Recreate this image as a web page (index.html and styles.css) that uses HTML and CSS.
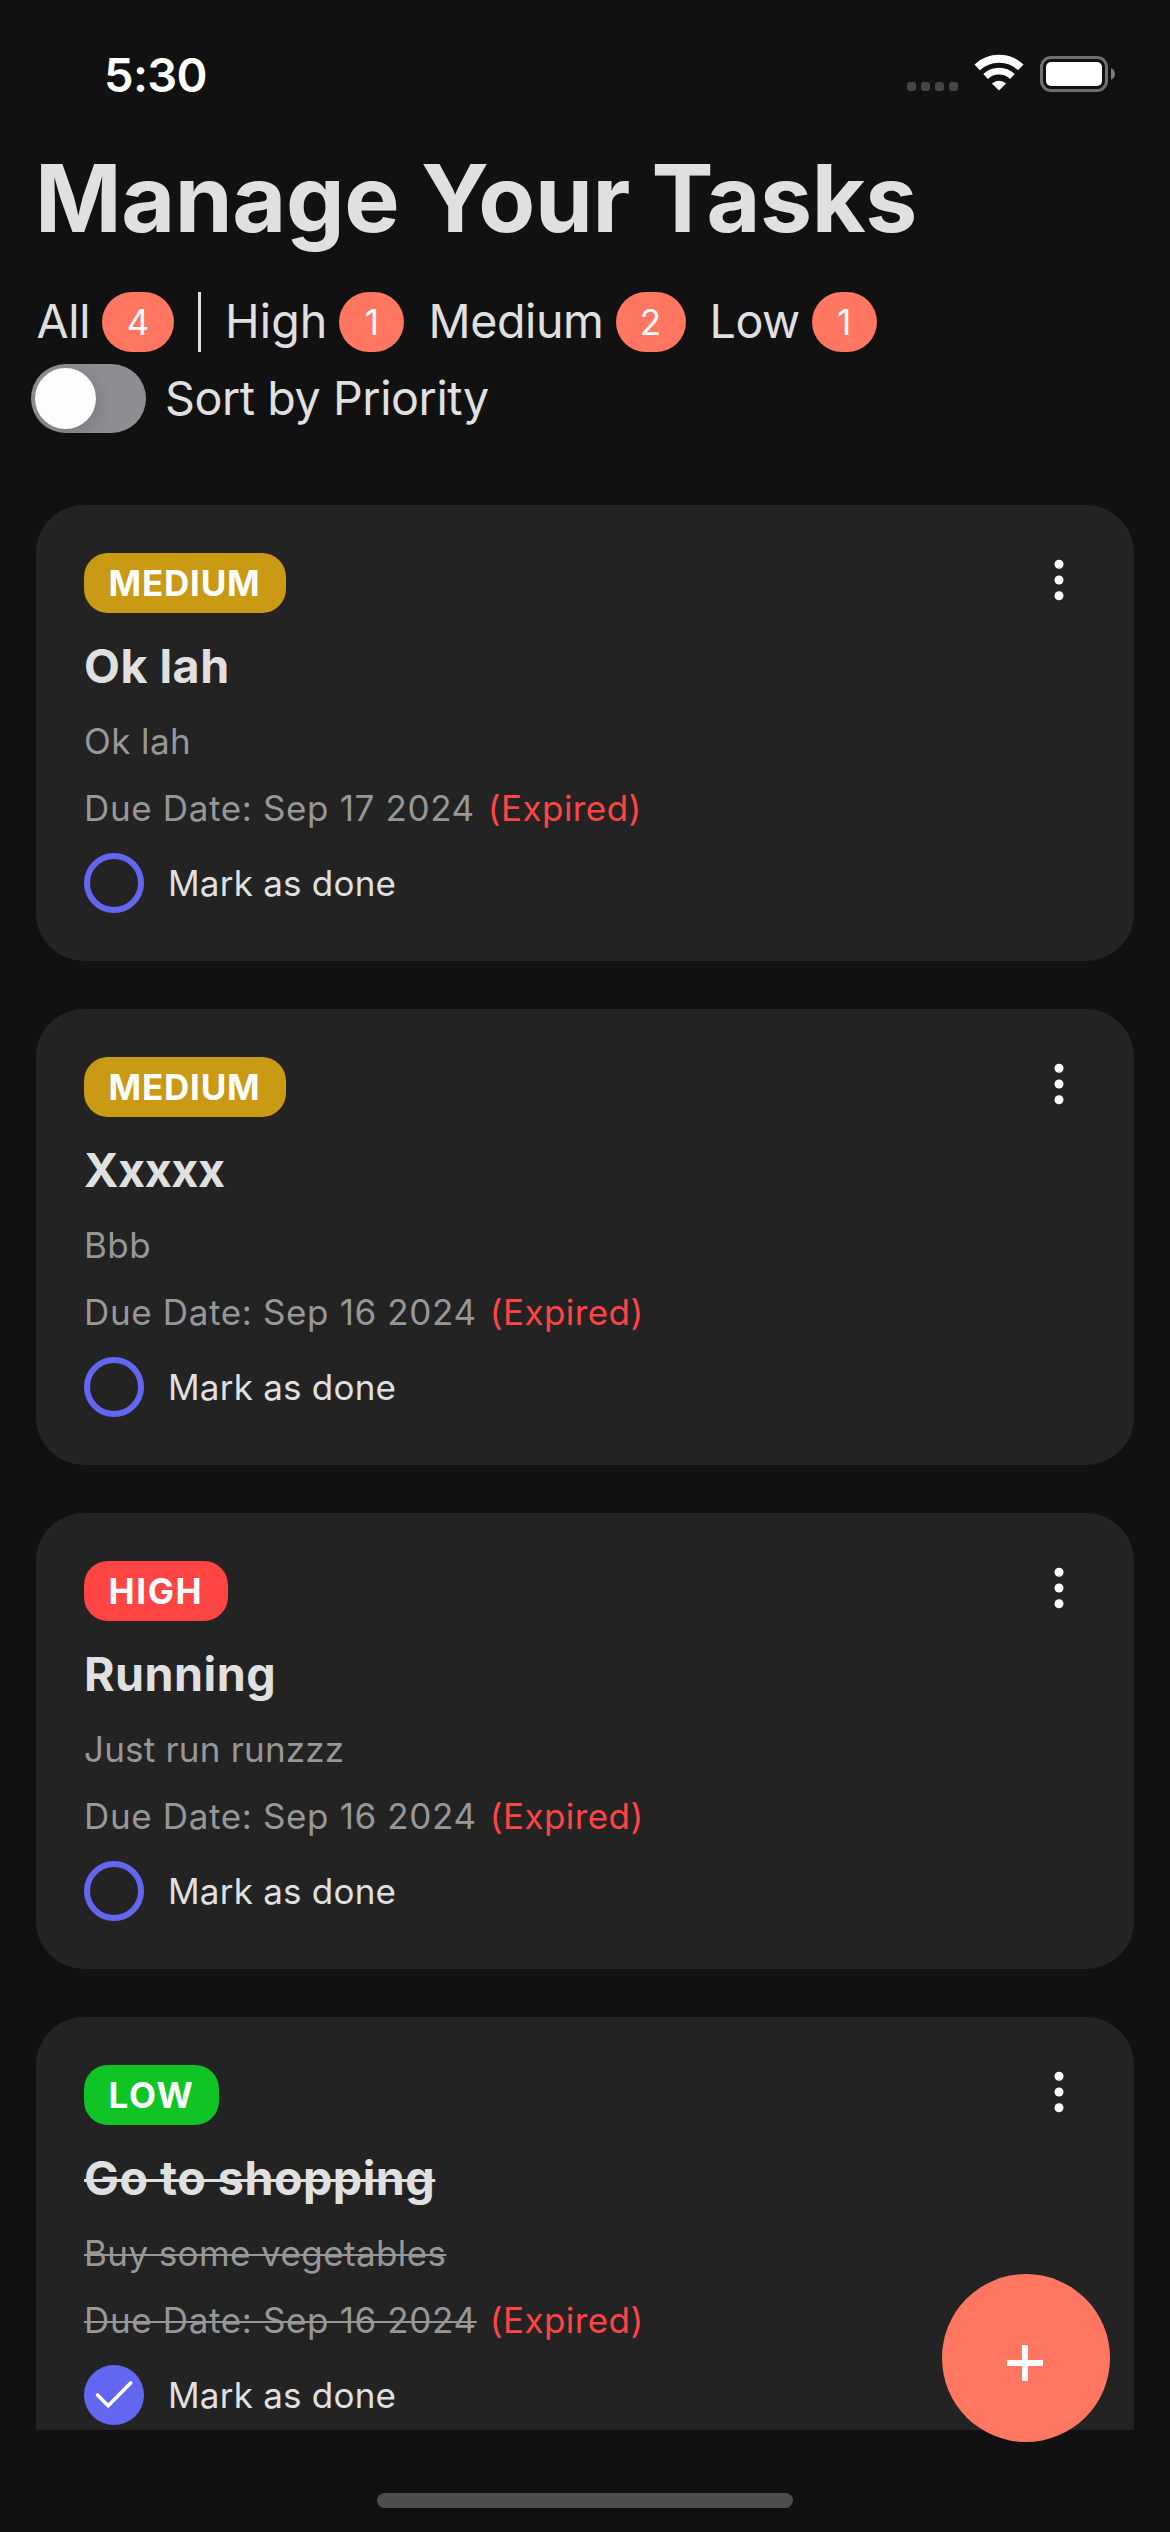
FILE: index.html
```html
<!DOCTYPE html>
<html lang="en">
<head>
<meta charset="utf-8">
<title>Manage Your Tasks</title>
<link rel="stylesheet" href="styles.css">
</head>
<body>
<div class="screen">
  <header class="status-bar">
    <span class="clock">5:30</span>
    <div class="status-icons">
      <div class="signal"><i></i><i></i><i></i><i></i></div>
      <svg class="wifi" width="50" height="38" viewBox="0 0 50 38">
        <path d="M3.2 13.4A32 32 0 0 1 46.8 13.4" fill="none" stroke="#fff" stroke-width="8"/>
        <path d="M11.6 22.4A19.7 19.7 0 0 1 38.4 22.4" fill="none" stroke="#fff" stroke-width="6.8"/>
        <path d="M25 36.6L17.9 29.6A10.4 10.4 0 0 1 32.1 29.6Z" fill="#fff"/>
      </svg>
      <svg class="battery" width="76" height="36" viewBox="0 0 76 36">
        <rect x="1.5" y="1.5" width="65" height="33" rx="9.5" fill="none" stroke="#6f6f6f" stroke-width="3"/>
        <rect x="6" y="6" width="56" height="24" rx="5" fill="#fff"/>
        <path d="M71 12.2C73.6 13.2 75 15.4 75 18S73.6 22.8 71 23.8Z" fill="#7c7c7c"/>
      </svg>
    </div>
  </header>

  <h1 class="page-title">Manage Your Tasks</h1>

  <nav class="filters">
    <div class="filter"><span class="filter-name">All</span><span class="count count-all">4</span></div>
    <div class="divider"></div>
    <div class="filter"><span class="filter-name high">High</span><span class="count count-narrow">1</span></div>
    <div class="filter"><span class="filter-name">Medium</span><span class="count">2</span></div>
    <div class="filter"><span class="filter-name low">Low</span><span class="count count-narrow">1</span></div>
  </nav>

  <div class="sort">
    <div class="toggle"><div class="knob"></div></div>
    <span class="sort-label">Sort by Priority</span>
  </div>

  <main class="tasks">
    <article class="card">
      <div class="card-head">
        <span class="badge medium">MEDIUM</span>
        <svg class="more" width="12" height="44" viewBox="0 0 12 44"><g fill="#fff"><circle cx="6" cy="6.3" r="4.5"/><circle cx="6" cy="22" r="4.5"/><circle cx="6" cy="37.7" r="4.5"/></g></svg>
      </div>
      <h2 class="task-title">Ok lah</h2>
      <p class="task-desc">Ok lah</p>
      <p class="due"><span class="due-date">Due Date: Sep 17 2024</span><span class="expired">(Expired)</span></p>
      <div class="done-row"><span class="check"></span><span class="done-label">Mark as done</span></div>
    </article>

    <article class="card">
      <div class="card-head">
        <span class="badge medium">MEDIUM</span>
        <svg class="more" width="12" height="44" viewBox="0 0 12 44"><g fill="#fff"><circle cx="6" cy="6.3" r="4.5"/><circle cx="6" cy="22" r="4.5"/><circle cx="6" cy="37.7" r="4.5"/></g></svg>
      </div>
      <h2 class="task-title tight">Xxxxx</h2>
      <p class="task-desc">Bbb</p>
      <p class="due"><span class="due-date">Due Date: Sep 16 2024</span><span class="expired">(Expired)</span></p>
      <div class="done-row"><span class="check"></span><span class="done-label">Mark as done</span></div>
    </article>

    <article class="card">
      <div class="card-head">
        <span class="badge high">HIGH</span>
        <svg class="more" width="12" height="44" viewBox="0 0 12 44"><g fill="#fff"><circle cx="6" cy="6.3" r="4.5"/><circle cx="6" cy="22" r="4.5"/><circle cx="6" cy="37.7" r="4.5"/></g></svg>
      </div>
      <h2 class="task-title">Running</h2>
      <p class="task-desc snug">Just run runzzz</p>
      <p class="due"><span class="due-date">Due Date: Sep 16 2024</span><span class="expired">(Expired)</span></p>
      <div class="done-row"><span class="check"></span><span class="done-label">Mark as done</span></div>
    </article>

    <article class="card completed">
      <div class="card-head">
        <span class="badge low">LOW</span>
        <svg class="more" width="12" height="44" viewBox="0 0 12 44"><g fill="#fff"><circle cx="6" cy="6.3" r="4.5"/><circle cx="6" cy="22" r="4.5"/><circle cx="6" cy="37.7" r="4.5"/></g></svg>
      </div>
      <h2 class="task-title">Go to shopping</h2>
      <p class="task-desc">Buy some vegetables</p>
      <p class="due"><span class="due-date">Due Date: Sep 16 2024</span><span class="expired">(Expired)</span></p>
      <div class="done-row">
        <span class="check checked">
          <svg width="60" height="60" viewBox="0 0 60 60"><path d="M13.5 30L24.2 40.7L46.7 18" fill="none" stroke="#fff" stroke-width="3.6" stroke-linecap="round" stroke-linejoin="miter"/></svg>
        </span>
        <span class="done-label">Mark as done</span>
      </div>
    </article>
  </main>

  <footer class="home-area"><div class="home-indicator"></div></footer>

  <button class="fab" aria-label="Add task">
    <svg width="36" height="36" viewBox="0 0 36 36"><path d="M18 0V36M0 18H36" stroke="#fff" stroke-width="6"/></svg>
  </button>
</div>
</body>
</html>
```
FILE: styles.css
```css
* {
  box-sizing: border-box;
  margin: 0;
  padding: 0;
}

body {
  background: #111;
  color: #e0e0e0;
  font-family: Inter, "Liberation Sans", sans-serif;
}

.screen {
  position: relative;
  display: flex;
  flex-direction: column;
  width: 1170px;
  height: 2532px;
  overflow: hidden;
  background: #111;
}

.status-bar {
  display: flex;
  justify-content: space-between;
  align-items: flex-start;
  height: 141px;
  padding: 54px 54px 0 104px;
}

.clock {
  color: #fff;
  font-size: 47px;
  font-weight: 600;
  line-height: 41px;
  letter-spacing: -0.65px;
}

.status-icons {
  display: flex;
  align-items: flex-start;
}

.signal {
  display: flex;
  gap: 5px;
  width: 51px;
  margin: 28px 16px 0 0;
}

.signal i {
  width: 9px;
  height: 9px;
  border-radius: 3px;
  background: #464646;
}

.wifi {
  margin-right: 16px;
}

.battery {
  margin-top: 2px;
}

.page-title {
  padding-left: 35px;
  font-size: 93px;
  font-weight: 700;
  line-height: 115px;
  letter-spacing: -0.4px;
}

.filters {
  display: flex;
  gap: 24px;
  margin-top: 36px;
  padding-left: 36.5px;
}

.filter {
  display: flex;
  gap: 12px;
}

.filter-name {
  font-size: 46.6px;
  line-height: 58px;
  letter-spacing: -0.4px;
}

.filter-name.high {
  letter-spacing: 0.1px;
}

.filter-name.low {
  letter-spacing: -0.5px;
}

.count {
  width: 70px;
  height: 60px;
  border-radius: 30px;
  background: #ff7661;
  color: #fff;
  font-size: 35px;
  line-height: 61px;
  text-align: center;
}

.count-all {
  width: 72px;
}

.count-narrow {
  width: 65px;
}

.divider {
  width: 3px;
  height: 60px;
  background: #e0e0e0;
}

.sort {
  display: flex;
  align-items: flex-start;
  gap: 19px;
  height: 69px;
  margin-top: 12px;
  padding-left: 31px;
}

.toggle {
  width: 115px;
  height: 69px;
  padding: 4px;
  border-radius: 35px;
  background: #8d8d92;
}

.knob {
  width: 61px;
  height: 61px;
  border-radius: 50%;
  background: #fdfdfd;
  box-shadow: 4px 5px 16px rgba(0, 0, 0, 0.12);
}

.sort-label {
  font-size: 46.6px;
  line-height: 68px;
  letter-spacing: -0.42px;
}

.tasks {
  display: flex;
  flex-direction: column;
  gap: 48px;
  height: 1925px;
  margin-top: 72px;
  padding: 0 36px;
  overflow: hidden;
}

.card {
  flex: none;
  height: 456px;
  padding: 48px;
  border-radius: 48px;
  background: #232323;
}

.card-head {
  display: flex;
  justify-content: space-between;
  height: 60px;
}

.badge {
  height: 60px;
  padding: 0 0 0 24.5px;
  border-radius: 24px;
  color: #fff;
  font-size: 35px;
  font-weight: 700;
  line-height: 60px;
  letter-spacing: 1.6px;
}

.badge.medium {
  width: 202px;
  background: #ca9a15;
  letter-spacing: 0.8px;
}

.badge.high {
  width: 144px;
  background: #ff4444;
}

.badge.low {
  width: 135px;
  background: #10c425;
}

.more {
  margin: 5px 21px 0 0;
}

.task-title {
  margin-top: 24px;
  font-size: 46.6px;
  font-weight: 700;
  line-height: 58px;
  letter-spacing: 0.5px;
}

.task-title.tight {
  letter-spacing: -0.37px;
}

.task-desc {
  margin-top: 25px;
  color: #979797;
  font-size: 35px;
  line-height: 42px;
  letter-spacing: 0.4px;
}

.task-desc.snug {
  letter-spacing: 0.2px;
}

.due {
  display: flex;
  gap: 13px;
  margin-top: 25px;
  font-size: 35px;
  line-height: 42px;
}

.due-date {
  color: #979797;
  letter-spacing: 0.64px;
}

.expired {
  color: #ff4444;
  letter-spacing: 0.43px;
}

.completed .task-title {
  text-decoration: line-through;
  text-decoration-thickness: 3px;
  text-decoration-skip-ink: none;
}

.completed .task-desc,
.completed .due-date {
  text-decoration: line-through;
  text-decoration-thickness: 2px;
  text-decoration-skip-ink: none;
}

.done-row {
  display: flex;
  gap: 24px;
  margin-top: 24px;
}

.check {
  width: 60px;
  height: 60px;
  border: 6px solid #6366f1;
  border-radius: 50%;
}

.check.checked {
  border: 0;
  background: #6366f1;
}

.check svg {
  display: block;
}

.done-label {
  font-size: 35px;
  line-height: 60px;
  letter-spacing: 0.22px;
}

.home-area {
  display: flex;
  justify-content: center;
  height: 102px;
  padding-top: 63px;
}

.home-indicator {
  width: 416px;
  height: 15px;
  border-radius: 8px;
  background: #4d4d4d;
}

.fab {
  position: absolute;
  right: 60px;
  bottom: 90px;
  display: flex;
  justify-content: center;
  align-items: center;
  width: 168px;
  height: 168px;
  padding: 9px 2px 0 0;
  border: 0;
  border-radius: 50%;
  background: #ff7661;
}
```
